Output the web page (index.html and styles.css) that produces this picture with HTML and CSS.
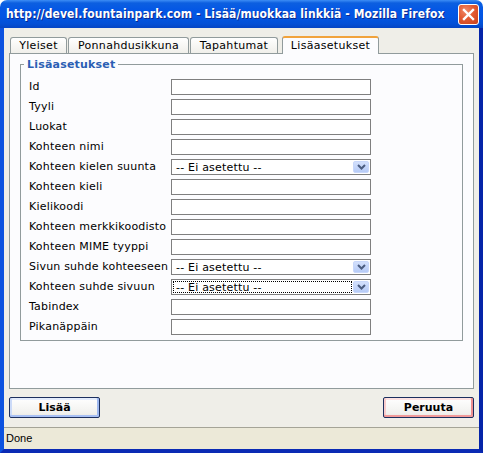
FILE: index.html
```html
<!DOCTYPE html>
<html lang="fi">
<head>
<meta charset="utf-8">
<title>Lisää/muokkaa linkkiä</title>
<link rel="stylesheet" href="styles.css">
</head>
<body>
<div class="window">
  <div class="titlebar">
    <span class="title">http://devel.fountainpark.com - Lisää/muokkaa linkkiä - Mozilla Firefox</span>
    <span class="close"><svg width="13" height="13" viewBox="0 0 13 13"><path d="M2 2 L11 11 M11 2 L2 11" stroke="#fff" stroke-width="2.4" stroke-linecap="square"/></svg></span>
  </div>
  <div class="client">
    <div class="dialog">
      <div class="tabs">
        <span class="tab tab-general">Yleiset</span>
        <span class="tab tab-popup">Ponnahdusikkuna</span>
        <span class="tab tab-events">Tapahtumat</span>
        <span class="tab tab-advanced active">Lisäasetukset</span>
      </div>
      <div class="panel">
        <fieldset class="group">
          <legend>Lisäasetukset</legend>
          <div class="form">
            <label>Id</label><span class="field"></span>
            <label>Tyyli</label><span class="field"></span>
            <label>Luokat</label><span class="field"></span>
            <label>Kohteen nimi</label><span class="field"></span>
            <label>Kohteen kielen suunta</label>
            <span class="select"><span class="sel-text">-- Ei asetettu --</span><span class="arrow"><svg width="9" height="6" viewBox="0 0 9 6"><path d="M1 1 L4.5 4.5 L8 1" fill="none" stroke="#4b5d80" stroke-width="2"/></svg></span></span>
            <label>Kohteen kieli</label><span class="field"></span>
            <label>Kielikoodi</label><span class="field"></span>
            <label>Kohteen merkkikoodisto</label><span class="field"></span>
            <label>Kohteen MIME tyyppi</label><span class="field"></span>
            <label>Sivun suhde kohteeseen</label>
            <span class="select"><span class="sel-text">-- Ei asetettu --</span><span class="arrow"><svg width="9" height="6" viewBox="0 0 9 6"><path d="M1 1 L4.5 4.5 L8 1" fill="none" stroke="#4b5d80" stroke-width="2"/></svg></span></span>
            <label>Kohteen suhde sivuun</label>
            <span class="select"><span class="sel-text focused">-- Ei asetettu --</span><span class="arrow"><svg width="9" height="6" viewBox="0 0 9 6"><path d="M1 1 L4.5 4.5 L8 1" fill="none" stroke="#4b5d80" stroke-width="2"/></svg></span></span>
            <label>Tabindex</label><span class="field"></span>
            <label>Pikanäppäin</label><span class="field"></span>
          </div>
        </fieldset>
      </div>
      <div class="buttons">
        <span class="btn btn-insert">Lisää</span>
        <span class="btn btn-cancel">Peruuta</span>
      </div>
    </div>
    <div class="status">Done</div>
  </div>
</div>
</body>
</html>
```

FILE: styles.css
```css
* { box-sizing: border-box; }
html, body { margin: 0; padding: 0; }
body {
  width: 486px;
  height: 453px;
  overflow: hidden;
  background: #ffffff;
  font-family: "DejaVu Sans", Verdana, sans-serif;
}
.window {
  width: 483px;
  height: 453px;
  display: flex;
  flex-direction: column;
}
.titlebar {
  height: 28px;
  flex: none;
  display: flex;
  align-items: center;
  justify-content: space-between;
  padding: 0 4px 0 6px;
  border-radius: 7px 7px 0 0;
  background: linear-gradient(#3d8df5 0px, #0c5fe0 3px, #0457e5 10px, #0255e3 60%, #0450d6 85%, #0545c4 100%);
}
.title {
  color: #ffffff;
  font: bold 12px "DejaVu Sans Condensed", "DejaVu Sans", sans-serif;
  letter-spacing: 0.1px;
  text-shadow: 1px 1px 0 #0c2a8e;
  white-space: nowrap;
}
.close {
  width: 21px;
  height: 21px;
  border: 1px solid #ffffff;
  border-radius: 3px;
  background: radial-gradient(circle at 35% 30%, #f08a6a 0%, #e35b33 45%, #c9401b 100%);
  display: flex;
  align-items: center;
  justify-content: center;
}
.client {
  flex: 1;
  display: flex;
  flex-direction: column;
  background: #efeee8;
  border-left: 4px solid #0c52e0;
  border-right: 4px solid #0524a8;
  border-bottom: 4px solid #0a2ab4;
}
.dialog {
  flex: 1;
  display: flex;
  flex-direction: column;
  padding: 8px 5px 0 5px;
}
.tabs {
  display: flex;
  align-items: flex-end;
  height: 17px;
  padding-left: 1px;
  gap: 1px;
}
.tab {
  height: 16px;
  font-size: 11px;
  line-height: 15px;
  letter-spacing: 0.3px;
  text-align: center;
  color: #000;
  border: 1px solid #919b9c;
  border-bottom: none;
  border-radius: 3px 3px 0 0;
  background: linear-gradient(#ffffff, #f0efea);
  white-space: nowrap;
}
.tab-general { width: 57px; }
.tab-popup { width: 121px; }
.tab-events { width: 88px; }
.tab-advanced { width: 97px; }
.tab.active {
  position: relative;
  z-index: 1;
  height: 18px;
  margin-left: 3px;
  margin-bottom: -1px;
  border-top: 2px solid #f1a33c;
  background: #fcfcfe;
  line-height: 15px;
}
.panel {
  height: 336px;
  flex: none;
  border: 1px solid #919b9c;
  background: #fcfcfe;
  padding: 4px 10px 10px 10px;
}
.group {
  margin: 0;
  border: 1px solid #919b9c;
  padding: 6px 8px 5px 8px;
}
.group legend {
  margin-left: -5px;
  padding: 0 3px;
  font-weight: bold;
  font-size: 11px;
  line-height: 13px;
  letter-spacing: 0.2px;
  color: #2b5fb4;
}
.form {
  display: grid;
  grid-template-columns: 142px 200px;
  grid-auto-rows: 16px;
  row-gap: 4px;
  align-items: center;
  padding-top: 2px;
}
.form label {
  font-size: 11px;
  line-height: 16px;
  letter-spacing: 0.2px;
  color: #000;
  white-space: nowrap;
}
.field {
  display: block;
  height: 16px;
  border: 1px solid #7f7f7f;
  background: #ffffff;
}
.select {
  display: flex;
  height: 16px;
  border: 1px solid #7f7f7f;
  background: #ffffff;
  padding: 1px;
  gap: 1px;
}
.sel-text {
  flex: 1;
  font-size: 11px;
  line-height: 12px;
  letter-spacing: 0.2px;
  padding-left: 2px;
  border: 1px dotted transparent;
  white-space: nowrap;
}
.sel-text.focused { border-color: #000000; }
.arrow {
  width: 16px;
  height: 12px;
  border-radius: 2px;
  background: linear-gradient(#d3e0fc, #b6cbf7);
  border: 1px solid #c8d7fa;
  display: flex;
  align-items: center;
  justify-content: center;
}
.buttons {
  display: flex;
  justify-content: space-between;
  margin-top: 8px;
}
.btn {
  width: 91px;
  height: 21px;
  border: 1px solid #1c2f5e;
  border-radius: 2px;
  font-weight: bold;
  font-size: 11px;
  line-height: 19px;
  text-align: center;
  color: #000;
  background: linear-gradient(#ffffff, #f1f1ee 80%, #e6e5de);
}
.btn-insert {
  box-shadow: inset 0 -2px 0 #a8c0f4, inset -2px 0 0 #9fb9f0, inset 2px 0 0 #cbdaf8, inset 0 2px 0 #e4ecfc;
}
.btn-cancel {
  box-shadow: inset 0 -2px 0 #f19a9a, inset -2px 0 0 #ef9090, inset 2px 0 0 #f8cccc, inset 0 2px 0 #fde2e2;
}
.status {
  height: 22px;
  flex: none;
  margin-top: 9px;
  border-top: 1px solid #a5a497;
  background: #ece9d8;
  padding-left: 2px;
  font: 11px "Liberation Sans", Tahoma, sans-serif;
  line-height: 20px;
  color: #000;
}
```
